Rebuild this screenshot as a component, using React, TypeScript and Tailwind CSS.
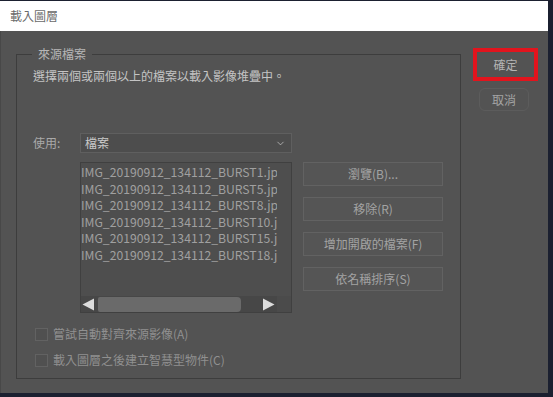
import React from 'react';
import { ChevronDown } from 'lucide-react';

const FILES = [
  'IMG_20190912_134112_BURST1.jpg',
  'IMG_20190912_134112_BURST5.jpg',
  'IMG_20190912_134112_BURST8.jpg',
  'IMG_20190912_134112_BURST10.jpg',
  'IMG_20190912_134112_BURST15.jpg',
  'IMG_20190912_134112_BURST18.jpg',
];

const SIDE_BUTTONS = ['瀏覽(B)...', '移除(R)', '增加開啟的檔案(F)', '依名稱排序(S)'];

const OPTIONS = ['嘗試自動對齊來源影像(A)', '載入圖層之後建立智慧型物件(C)'];

function Arrow({ dir }: { dir: 'left' | 'right' }) {
  return (
    <svg width="13" height="13" viewBox="0 0 13 13" className="shrink-0">
      {dir === 'left' ? (
        <polygon points="12,0.5 12,12.5 0.5,6.5" fill="#dcdcdc" />
      ) : (
        <polygon points="1,0.5 1,12.5 12.5,6.5" fill="#dcdcdc" />
      )}
    </svg>
  );
}

export default function App() {
  return (
    <div
      className="w-[553px] h-[397px] bg-[#1b2030] overflow-hidden"
      style={{ fontFamily: '"Noto Sans CJK TC", "Noto Sans", sans-serif' }}
    >
      <div className="w-[548px] h-[392px] mt-[1px] flex flex-col">
        <div className="h-[30px] shrink-0 bg-white flex items-center pl-[10px] text-[12px] text-[#6a6a6a]">
          載入圖層
        </div>

        <div className="flex-1 flex bg-[#535353] border-l border-[#484848]">
          <fieldset className="ml-[15px] mt-[15px] w-[445px] h-[333px] border border-[#3d3d3d] pl-[16px] pt-[6px] text-[12px]">
            <legend className="ml-[-1px] px-[6px] leading-[16px] text-[#b6b6b6]">來源檔案</legend>

            <div className="h-[16px] leading-[16px] text-[#c4c4c4]">
              選擇兩個或兩個以上的檔案以載入影像堆疊中。
            </div>

            <div className="mt-[49px] h-[20px] flex items-center">
              <span className="w-[47px] text-[#a9a9a9]">使用:</span>
              <div className="w-[212px] h-[20px] bg-[#4d4d4d] border border-[#5f5f5f] flex items-center justify-between pl-[4px] pr-[5px] text-[#cacaca]">
                <span>檔案</span>
                <ChevronDown size={11} strokeWidth={1.6} color="#c8c8c8" />
              </div>
            </div>

            <div className="mt-[9px] flex">
              <div className="ml-[47px] w-[212px] h-[151px] bg-[#4e4e4e] border border-[#404040] grid grid-cols-[196px_1fr] grid-rows-[1fr_16px]">
                <div className="pt-[1px] overflow-hidden text-[12.2px] leading-[16.6px] text-[#a0a0a0] whitespace-nowrap">
                  {FILES.map((f) => (
                    <div key={f}>{f}</div>
                  ))}
                </div>
                <div />
                <div className="bg-[#474747] flex items-center pl-[1px] pr-[2px]">
                  <Arrow dir="left" />
                  <div className="ml-[3px] w-[143px] h-[15px] bg-[#6a6a6a] rounded-r-[4px] rounded-l-[2px]" />
                  <div className="flex-1" />
                  <Arrow dir="right" />
                </div>
                <div className="bg-[#4b4b4b]" />
              </div>

              <div className="ml-[11px] flex flex-col gap-[11px]">
                {SIDE_BUTTONS.map((b) => (
                  <div
                    key={b}
                    className="w-[140px] h-[24px] bg-[#555555] border border-[#626262] flex items-center justify-center text-[#a3a3a3]"
                  >
                    {b}
                  </div>
                ))}
              </div>
            </div>

            <div className="mt-[13px] flex flex-col gap-[10px]">
              {OPTIONS.map((o) => (
                <div key={o} className="h-[16px] flex items-center pl-[2px]">
                  <div className="w-[13px] h-[13px] border border-[#626262] bg-[#505050]" />
                  <span className="ml-[5px] text-[#909090]">{o}</span>
                </div>
              ))}
            </div>
          </fieldset>

          <div className="ml-[12px] mt-[17px] flex flex-col text-[12px]">
            <div className="w-[65px] h-[33px] border-[4px] border-[#e2141d] flex items-center justify-center text-[#b4b4b4]">
              確定
            </div>
            <div className="ml-[6px] mt-[7px] w-[50px] h-[23px] rounded-[6px] border border-[#5c5c5c] flex items-center justify-center text-[#a4a4a4]">
              取消
            </div>
          </div>
        </div>
      </div>
    </div>
  );
}
